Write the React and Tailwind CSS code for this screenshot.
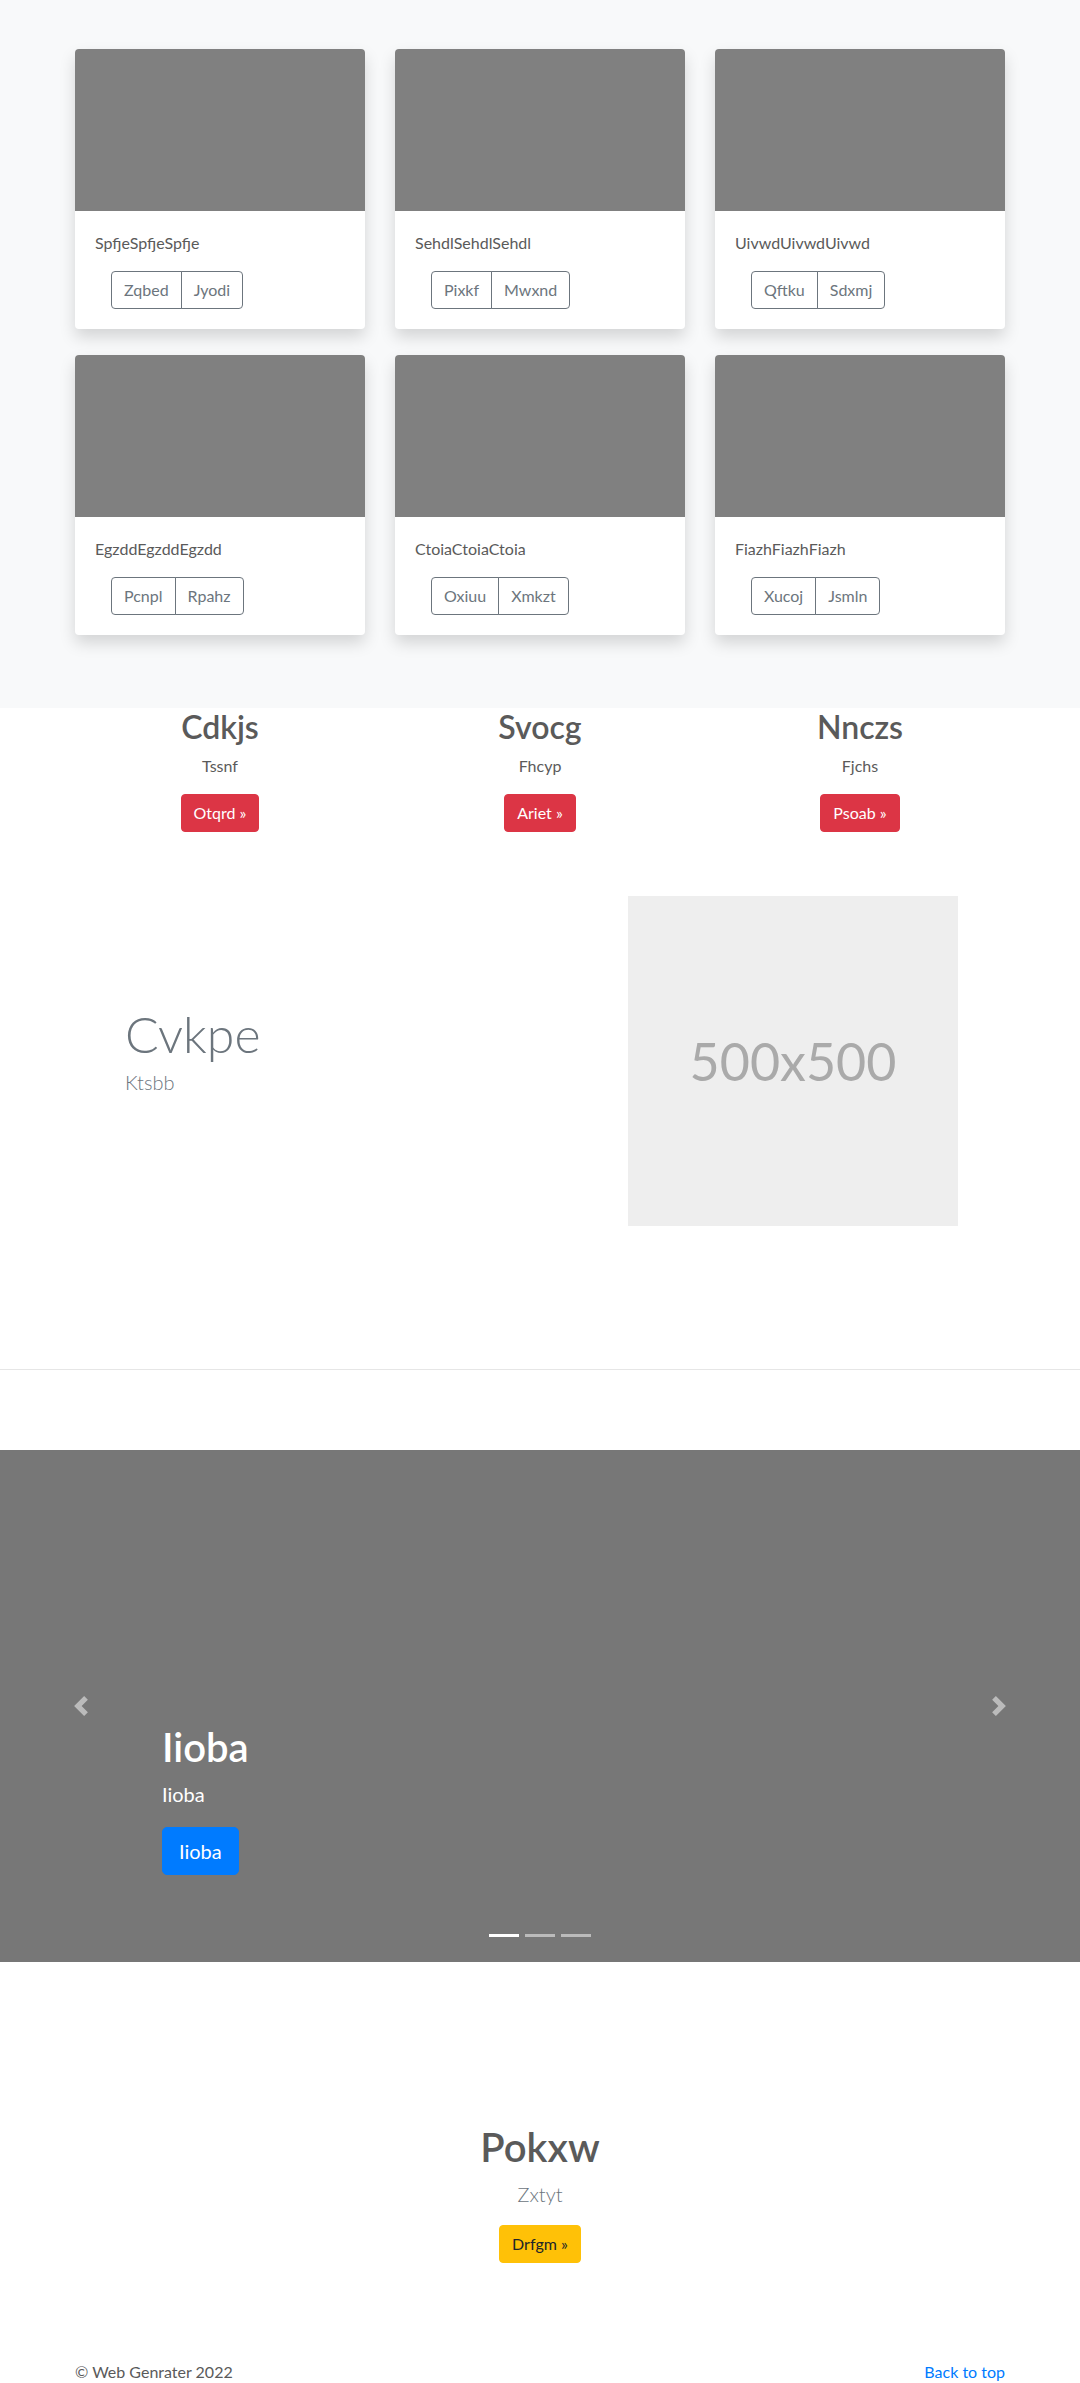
import React from 'react';

const cards = [
  { title: 'SpfjeSpfjeSpfje', btns: ['Zqbed', 'Jyodi'] },
  { title: 'SehdlSehdlSehdl', btns: ['Pixkf', 'Mwxnd'] },
  { title: 'UivwdUivwdUivwd', btns: ['Qftku', 'Sdxmj'] },
  { title: 'EgzddEgzddEgzdd', btns: ['Pcnpl', 'Rpahz'] },
  { title: 'CtoiaCtoiaCtoia', btns: ['Oxiuu', 'Xmkzt'] },
  { title: 'FiazhFiazhFiazh', btns: ['Xucoj', 'Jsmln'] },
];

const features = [
  { title: 'Cdkjs', text: 'Tssnf', btn: 'Otqrd' },
  { title: 'Svocg', text: 'Fhcyp', btn: 'Ariet' },
  { title: 'Nnczs', text: 'Fjchs', btn: 'Psoab' },
];

const Chevron = ({ dir }) => (
  <svg width="20" height="20" viewBox="0 0 8 8" className="opacity-50">
    <path
      fill="#fff"
      d={dir === 'left'
        ? 'M5.25 0l-4 4 4 4 1.5-1.5L4.25 4l2.5-2.5L5.25 0z'
        : 'M2.75 0l-1.5 1.5L3.75 4l-2.5 2.5L2.75 8l4-4-4-4z'}
    />
  </svg>
);

const App = () => {
  return (
    <div className="min-h-screen bg-white text-[#5a5a5a] text-[16px] leading-6 font-[Lato,Liberation_Sans,sans-serif]">
      {/* Album */}
      <section className="bg-[#f8f9fa] pt-[49px] pb-[73px]">
        <div className="w-[960px] mx-auto px-[15px]">
          <div className="grid grid-cols-3 gap-x-[30px] gap-y-[26px]">
            {cards.map((card, i) => (
              <div key={i} className="bg-white rounded-[4px] overflow-hidden shadow-[0_0.5rem_1rem_rgba(0,0,0,0.15)]">
                <div className="h-[162px] bg-[#808080]" />
                <div className="p-5">
                  <p className="mb-4">{card.title}</p>
                  <div className="inline-flex ml-4">
                    <button className="px-3 py-1.5 border border-[#6c757d] text-[#6c757d] rounded-l-[4px] leading-6">
                      {card.btns[0]}
                    </button>
                    <button className="-ml-px px-3 py-1.5 border border-[#6c757d] text-[#6c757d] rounded-r-[4px] leading-6">
                      {card.btns[1]}
                    </button>
                  </div>
                </div>
              </div>
            ))}
          </div>
        </div>
      </section>

      {/* Features */}
      <section className="w-[960px] mx-auto px-[15px] pb-[24px]">
        <div className="grid grid-cols-3 gap-x-[30px]">
          {features.map((f, i) => (
            <div key={i} className="text-center">
              <h2 className="text-[32px] font-semibold leading-[1.2] mb-2">{f.title}</h2>
              <p className="mb-4">{f.text}</p>
              <button className="bg-[#dc3545] text-white px-3 py-1.5 border border-[#dc3545] rounded-[4px] leading-6">
                {f.btn} »
              </button>
            </div>
          ))}
        </div>
      </section>

      {/* Featurette */}
      <section className="w-[960px] mx-auto px-[15px] mt-[40px] pb-[143px]">
        <div className="flex items-center">
          <div className="w-[553px] pl-[50px]">
            <h2 className="text-[50px] font-light leading-none mb-2 text-[#6c757d]">Cvkpe</h2>
            <p className="text-[20px] font-light leading-[1.5] mb-4 text-[#6c757d]">Ktsbb</p>
          </div>
          <div className="w-[330px] h-[330px] bg-[#eee] flex items-center justify-center">
            <span className="text-[52px] text-[#aaa]">500x500</span>
          </div>
        </div>
      </section>

      <hr className="border-0 border-t border-[#e6e6e6] mb-[80px]" />

      {/* Carousel */}
      <div className="relative h-[512px] bg-[#777]">
        <div className="absolute left-0 top-0 bottom-0 w-[15%] flex items-center justify-center">
          <Chevron dir="left" />
        </div>
        <div className="absolute right-0 top-0 bottom-0 w-[15%] flex items-center justify-center">
          <Chevron dir="right" />
        </div>
        <div className="absolute left-[15%] right-[15%] bottom-[87px] text-white">
          <h1 className="text-[40px] font-semibold leading-[48px] mb-2">Iioba</h1>
          <p className="text-[20px] leading-[30px] mb-[18px]">Iioba</p>
          <button className="bg-[#007bff] border border-[#007bff] text-white text-[20px] leading-[30px] px-4 py-2 rounded-[5px]">
            Iioba
          </button>
        </div>
        <div className="absolute bottom-[25px] left-0 right-0 flex justify-center">
          <span className="w-[30px] h-[3px] mx-[3px] bg-white" />
          <span className="w-[30px] h-[3px] mx-[3px] bg-white opacity-50" />
          <span className="w-[30px] h-[3px] mx-[3px] bg-white opacity-50" />
        </div>
      </div>

      {/* Jumbotron */}
      <section className="text-center pt-[161px]">
        <h1 className="text-[40px] font-semibold leading-[48px] mb-2">Pokxw</h1>
        <p className="text-[20px] font-light leading-[30px] mb-4 text-[#6c757d]">Zxtyt</p>
        <button className="bg-[#ffc107] border border-[#ffc107] text-[#212529] px-3 py-1.5 rounded-[4px] leading-6">
          Drfgm »
        </button>
      </section>

      {/* Footer */}
      <footer className="w-[960px] mx-auto px-[15px] pt-[97px] pb-12">
        <div className="flex justify-between">
          <p>© Web Genrater 2022</p>
          <a href="#" className="text-[#007bff]">Back to top</a>
        </div>
      </footer>
    </div>
  );
};

export default App;
